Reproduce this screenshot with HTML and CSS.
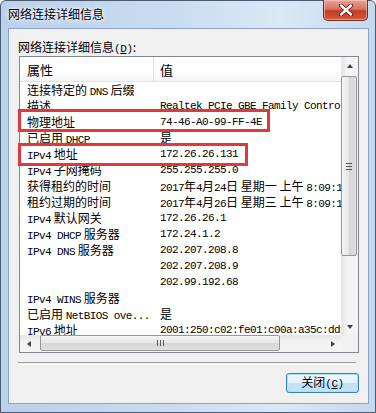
FILE: index.html
```
<!DOCTYPE html>
<html lang="zh-CN">
  <head>
    <meta charset="UTF-8" />
    <title>网络连接详细信息</title>
    <link rel="stylesheet" href="styles.css">
  </head>
  <body>
    <div class="window">
      <div class="titlebar">
        <span class="title">网络连接详细信息</span>
        <div class="close">
          <svg width="18" height="12" viewBox="0 0 18 12">
            <path d="M4 1.5 L14 10.5 M14 1.5 L4 10.5" stroke="#5a1a10" stroke-width="4.2" stroke-linecap="round" />
            <path d="M4 1.5 L14 10.5 M14 1.5 L4 10.5" stroke="#ffffff" stroke-width="2.4" stroke-linecap="round" />
          </svg>
        </div>
      </div>

      <div class="client">
        <div class="label">网络连接详细信息<span class="hk">(<u>D</u>)</span>:</div>

        <div class="listbox">
          <div class="view">
            <div class="head">
              <div class="c1">属性</div>
              <div class="c2">值</div>
            </div>
            <div class="row"><div class="c1">连接特定的 <span class="en">DNS</span> 后缀</div><div class="c2"></div></div>
            <div class="row"><div class="c1">描述</div><div class="c2 en">Realtek PCIe GBE Family Controller</div></div>
            <div class="row"><div class="c1">物理地址</div><div class="c2 en">74-46-A0-99-FF-4E</div></div>
            <div class="row"><div class="c1">已启用 <span class="en">DHCP</span></div><div class="c2">是</div></div>
            <div class="row"><div class="c1"><span class="en">IPv4</span> 地址</div><div class="c2 en">172.26.26.131</div></div>
            <div class="row"><div class="c1"><span class="en">IPv4</span> 子网掩码</div><div class="c2 en">255.255.255.0</div></div>
            <div class="row"><div class="c1">获得租约的时间</div><div class="c2"><span class="en">2017</span>年<span class="en">4</span>月<span class="en">24</span>日 星期一 上午 <span class="en">8:09:12</span></div></div>
            <div class="row"><div class="c1">租约过期的时间</div><div class="c2"><span class="en">2017</span>年<span class="en">4</span>月<span class="en">26</span>日 星期三 上午 <span class="en">8:09:12</span></div></div>
            <div class="row"><div class="c1"><span class="en">IPv4</span> 默认网关</div><div class="c2 en">172.26.26.1</div></div>
            <div class="row"><div class="c1"><span class="en">IPv4 DHCP</span> 服务器</div><div class="c2 en">172.24.1.2</div></div>
            <div class="row"><div class="c1"><span class="en">IPv4 DNS</span> 服务器</div><div class="c2 en">202.207.208.8</div></div>
            <div class="row"><div class="c1"></div><div class="c2 en">202.207.208.9</div></div>
            <div class="row"><div class="c1"></div><div class="c2 en">202.99.192.68</div></div>
            <div class="row"><div class="c1"><span class="en">IPv4 WINS</span> 服务器</div><div class="c2"></div></div>
            <div class="row"><div class="c1">已启用 <span class="en">NetBIOS ove...</span></div><div class="c2">是</div></div>
            <div class="row"><div class="c1"><span class="en">IPv6</span> 地址</div><div class="c2 en">2001:250:c02:fe01:c00a:a35c:dd1e:4f2b</div></div>
          </div>

          <!-- 竖向滚动条 -->
          <div class="vscroll">
            <div class="sbtn"><span class="arrow up"></span></div>
            <div class="vtrack"><div class="vthumb"><span class="grip-v"></span></div></div>
            <div class="sbtn"><span class="arrow down"></span></div>
          </div>

          <!-- 横向滚动条 -->
          <div class="hscroll">
            <div class="sbtn"><span class="arrow left"></span></div>
            <div class="htrack"><div class="hthumb"><span class="grip-h"></span></div></div>
            <div class="sbtn"><span class="arrow right"></span></div>
          </div>
          <div class="corner"></div>

          <!-- 红色标注框 -->
          <div class="mark mark1"></div>
          <div class="mark mark2"></div>
        </div>

        <div class="sep"></div>

        <div class="actions">
          <button class="btn">关闭<span class="hk">(<u>C</u>)</span></button>
        </div>
      </div>
    </div>
  </body>
</html>
```

FILE: styles.css
```
body {
  margin: 0;
  background-color: #ffffff;
  font-family: "Noto Sans CJK SC", "Liberation Sans", sans-serif;
  font-size: 12px;
  color: #000000;
}

.window {
  box-sizing: border-box;
  width: 376px;
  height: 413px;
  border: 1px solid #4a5a70;
  border-radius: 6px 6px 0 0;
  padding: 0 6px 8px 7px;
  display: flex;
  flex-direction: column;
  background: linear-gradient(to right, #b9d1ea 0%, #c9dcf0 45%, #dbe8f5 75%, #c4d8ee 100%);
}

.titlebar {
  height: 27px;
  display: flex;
  align-items: flex-start;
}
.title {
  margin-top: 5px;
  font-size: 12px;
  line-height: 16px;
  text-shadow: 0 0 6px #ffffff, 0 0 3px #ffffff;
}
.close {
  margin-left: auto;
  margin-right: 1px;
  margin-top: -1px;
  box-sizing: border-box;
  width: 45px;
  height: 21px;
  border: 1px solid #6b2a20;
  border-top: none;
  border-radius: 0 0 5px 5px;
  background: linear-gradient(#e8a397 0%, #d8735f 45%, #c63a22 55%, #d05a3e 100%);
  box-shadow: inset 0 0 0 1px rgba(255, 210, 200, 0.55);
  display: flex;
  align-items: center;
  justify-content: center;
}

.client {
  flex: 1;
  border: 1px solid #8da3bf;
  background-color: #f0f0f0;
  display: flex;
  flex-direction: column;
}

.label {
  height: 27px;
  padding-left: 9px;
  padding-top: 10px;
  box-sizing: border-box;
  line-height: 16px;
  font-size: 12px;
}
.hk {
  font-family: "Liberation Mono", monospace;
  font-size: 11px;
  letter-spacing: -0.4px;
}

.listbox {
  position: relative;
  margin-left: 10px;
  width: 340px;
  height: 297px;
  box-sizing: border-box;
  border: 1px solid #828790;
  background-color: #ffffff;
  display: grid;
  grid-template-columns: 321px 17px;
  grid-template-rows: 278px 17px;
}

.view {
  overflow: hidden;
  white-space: nowrap;
}
.head {
  display: flex;
  height: 25px;
  box-sizing: border-box;
  border-bottom: 1px solid #e2e2e2;
  background: linear-gradient(#ffffff 0%, #ffffff 55%, #f4f5f7 100%);
  font-size: 13px;
  line-height: 26px;
}
.head .c1 {
  border-right: 1px solid #e2e2e2;
}
.row {
  display: flex;
  height: 16px;
  line-height: 16px;
}
.c1 {
  width: 134px;
  flex: none;
  box-sizing: border-box;
  padding-left: 7px;
  overflow: hidden;
}
.c2 {
  flex: 1;
  padding-left: 6px;
  overflow: hidden;
}
.en {
  font-family: "Liberation Mono", monospace;
  font-size: 11px;
  letter-spacing: -0.6px;
}

.vscroll {
  display: flex;
  flex-direction: column;
  background: linear-gradient(to right, #e4e4e4, #f4f4f4 40%, #f4f4f4);
}
.hscroll {
  display: flex;
  background: linear-gradient(#e4e4e4, #f4f4f4 40%, #f4f4f4);
}
.corner {
  background-color: #f0f0f0;
}
.sbtn {
  width: 17px;
  height: 17px;
  flex: none;
  display: flex;
  align-items: center;
  justify-content: center;
}
.arrow {
  width: 0;
  height: 0;
  border: 3.5px solid transparent;
}
.arrow.up {
  border-bottom: 4px solid #404040;
  margin-top: -3px;
}
.arrow.down {
  border-top: 4px solid #404040;
  margin-bottom: -3px;
}
.arrow.left {
  border-right: 4px solid #404040;
  margin-left: -3px;
}
.arrow.right {
  border-left: 4px solid #404040;
  margin-right: -3px;
}

.vtrack {
  flex: 1;
  padding-top: 2px;
}
.vthumb {
  box-sizing: border-box;
  height: 180px;
  width: 16px;
  border: 1px solid #979797;
  border-radius: 2px;
  background: linear-gradient(to right, #f5f5f5, #e6e6e6 50%, #d6d6d6 51%, #e0e0e0);
  display: flex;
  align-items: center;
  justify-content: center;
}
.grip-v {
  width: 6px;
  height: 5px;
  border-top: 1px solid #555;
  border-bottom: 1px solid #555;
  background: linear-gradient(transparent 2px, #555 2px, #555 3px, transparent 3px);
}
.htrack {
  flex: 1;
  padding-left: 3px;
}
.hthumb {
  box-sizing: border-box;
  width: 240px;
  height: 16px;
  border: 1px solid #979797;
  border-radius: 2px;
  background: linear-gradient(#f5f5f5, #e6e6e6 50%, #d6d6d6 51%, #e0e0e0);
  display: flex;
  align-items: center;
  justify-content: center;
}
.grip-h {
  width: 5px;
  height: 6px;
  border-left: 1px solid #555;
  border-right: 1px solid #555;
  background: linear-gradient(to right, transparent 2px, #555 2px, #555 3px, transparent 3px);
}

.mark {
  position: absolute;
  left: -2px;
  height: 23px;
  box-sizing: border-box;
  border: 3px solid #e3373c;
}
.mark1 {
  top: 52px;
  width: 252px;
}
.mark2 {
  top: 86px;
  width: 230px;
}

.sep {
  margin: 9px 12px 0 9px;
  height: 1px;
  border-top: 1px solid #a0a0a0;
  border-bottom: 1px solid #ffffff;
}

.actions {
  display: flex;
  justify-content: flex-end;
  padding-right: 9px;
  margin-top: 8px;
}
.btn {
  width: 73px;
  height: 20px;
  border: 1px solid #3c7fb1;
  border-radius: 3px;
  background: linear-gradient(#f2f9fd 0%, #e3f1fa 50%, #c6e4f6 51%, #bfe0f5 100%);
  box-shadow: inset 0 0 0 1px #a8e3f8;
  font-family: "Noto Sans CJK SC", sans-serif;
  font-size: 12px;
  line-height: 16px;
  padding: 0;
  color: #000000;
}
```
